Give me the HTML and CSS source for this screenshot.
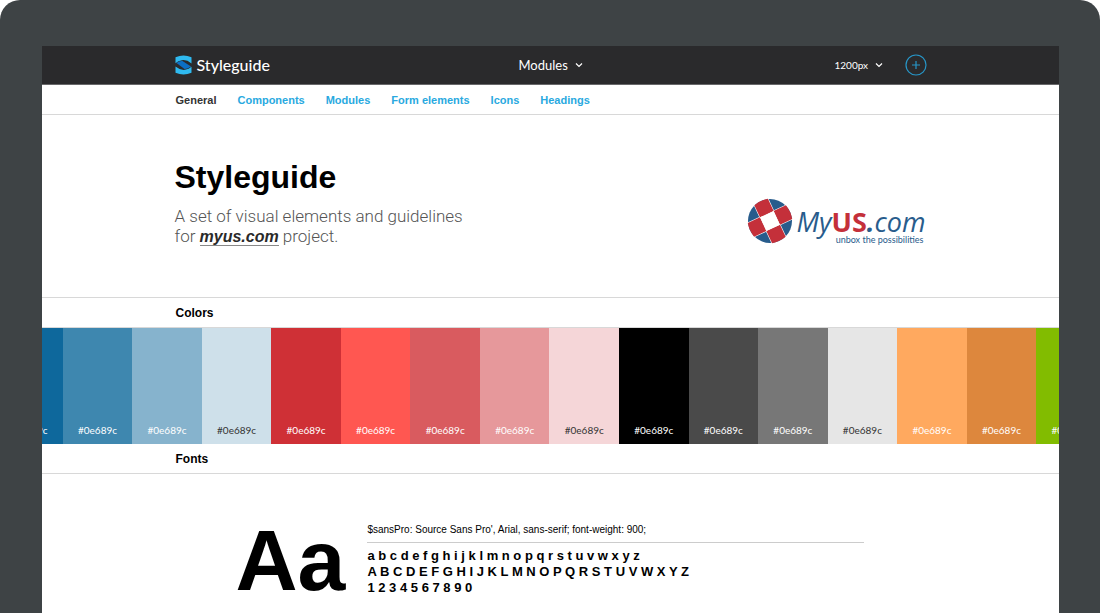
FILE: index.html
```html
<!DOCTYPE html>
<html lang="en">
<head>
<meta charset="utf-8">
<meta name="viewport" content="width=device-width, initial-scale=1">
<title>Styleguide</title>
<link rel="stylesheet" href="styles.css">
</head>
<body>
<div class="device">
  <div class="screen">
    <header class="topbar">
      <div class="container topbar-inner">
        <a class="brand" href="#">
          <svg class="brand-mark" viewBox="0 0 17 20" aria-hidden="true">
            <path fill="#2fb9ef" d="M.5 2.300Q8.500-1.300 16.500 2.300V8.400Q12 4.600 7 5.200Q3 5.800.5 8.200Z"/>
            <path fill="#2fb9ef" d="M16.500 17.700Q8.500 21.300.5 17.700V11.600Q5 15.400 10 14.800Q14 14.200 16.500 11.800Z"/>
            <path fill="#0c6fc4" d="M1.500 8Q4.500 5.600 7.500 6L16 11.600Q13 14.200 9.500 14Z"/>
          </svg>
          <span>Styleguide</span>
        </a>
        <label class="picker picker-main">
          <select aria-label="Section"><option>Modules</option></select>
          <svg class="chevron" viewBox="0 0 8 6" aria-hidden="true"><path d="M1 1.500 4 4.500 7 1.500"/></svg>
        </label>
        <div class="tools">
          <label class="picker picker-size">
            <select aria-label="Page width"><option>1200px</option></select>
            <svg class="chevron" viewBox="0 0 8 6" aria-hidden="true"><path d="M1 1.500 4 4.500 7 1.500"/></svg>
          </label>
          <button class="add" type="button" aria-label="Add">
            <svg viewBox="0 0 22 22" aria-hidden="true"><circle cx="11" cy="11" r="10"/><path d="M11 7V15M7 11H15"/></svg>
          </button>
        </div>
      </div>
    </header>

    <nav class="tabs">
      <div class="container tabs-inner">
        <a class="tab tab-active" href="#">General</a>
        <a class="tab" href="#">Components</a>
        <a class="tab" href="#">Modules</a>
        <a class="tab" href="#">Form elements</a>
        <a class="tab" href="#">Icons</a>
        <a class="tab" href="#">Headings</a>
      </div>
    </nav>

    <main>
      <section class="hero">
        <div class="container hero-inner">
          <div>
            <h1 class="hero-title">Styleguide</h1>
            <p class="hero-text">A set of visual elements and guidelines<br>for <a class="hero-link" href="#">myus.com</a> project.</p>
          </div>
          <div class="client">
            <svg class="client-mark" viewBox="0 0 46 46" aria-hidden="true">
              <circle cx="23" cy="23" r="22" fill="#285c8c"/>
              <g transform="rotate(-25 23 23)">
                <path stroke="#fff" stroke-width="1.200" d="M15.500 0V46M30.500 0V46M0 15.500H46M0 30.500H46"/>
                <path fill="#c4303a" d="M15.500 2Q23 0 30.500 2V15.500H15.500ZM15.500 30.500H30.500V44Q23 46 15.500 44ZM2 15.500H15.500V30.500H2Q0 23 2 15.500ZM30.500 15.500H44Q46 23 44 30.500H30.500Z"/>
                <path fill="#fff" d="M15.500 15.500H30.500V30.500H15.500Z"/>
              </g>
            </svg>
            <div class="client-words">
              <div class="client-name">My<b>US</b><strong>.</strong>com</div>
              <div class="client-tag">unbox the possibilities</div>
            </div>
          </div>
        </div>
      </section>

      <section>
        <h2 class="section-title"><span class="container">Colors</span></h2>
        <div class="swatch-strip">
          <ul class="swatches">
            <li class="swatch blue-1">#0e689c</li>
            <li class="swatch blue-2">#0e689c</li>
            <li class="swatch blue-3">#0e689c</li>
            <li class="swatch blue-4">#0e689c</li>
            <li class="swatch red-1">#0e689c</li>
            <li class="swatch red-2">#0e689c</li>
            <li class="swatch red-3">#0e689c</li>
            <li class="swatch red-4">#0e689c</li>
            <li class="swatch red-5">#0e689c</li>
            <li class="swatch gray-1">#0e689c</li>
            <li class="swatch gray-2">#0e689c</li>
            <li class="swatch gray-3">#0e689c</li>
            <li class="swatch gray-4">#0e689c</li>
            <li class="swatch orange-1">#0e689c</li>
            <li class="swatch orange-2">#0e689c</li>
            <li class="swatch green-1">#0e689c</li>
          </ul>
        </div>
      </section>

      <section>
        <h2 class="section-title section-line"><span class="container">Fonts</span></h2>
        <div class="font-card">
          <div class="font-sample">Aa</div>
          <div class="font-info">
            <p class="font-rule">$sansPro: Source Sans Pro', Arial, sans-serif; font-weight: 900;</p>
            <p class="font-glyphs">a b c d e f g h i j k l m n o p q r s t u v w x y z<br>A B C D E F G H I J K L M N O P Q R S T U V W X Y Z<br>1 2 3 4 5 6 7 8 9 0</p>
          </div>
        </div>
      </section>
    </main>
  </div>
</div>
</body>
</html>
```
FILE: styles.css
```css
* { box-sizing: border-box; }
body {
  margin: 0;
  background: #fff;
  font-family: "Liberation Sans", Arial, sans-serif;
  color: #000;
}
h1, h2, p, ul { margin: 0; padding: 0; }
a { text-decoration: none; }

.device {
  height: 100vh;
  padding: 46px 41px 0 42px;
  border-radius: 20px 20px 0 0;
  background: #3e4345;
  overflow: hidden;
}
.screen { min-height: 100%; background: #fff; overflow: hidden; }
.container { display: block; width: 100%; max-width: 752px; margin: 0 auto; }

.topbar {
  background: #2a2a2c;
  color: #fff;
  font-family: Lato, sans-serif;
  border-bottom: 1px solid #68686a;
}
.topbar-inner {
  display: grid;
  grid-template-columns: 1fr auto 1fr;
  align-items: center;
  height: 38px;
}
.brand {
  display: flex;
  align-items: center;
  gap: 5px;
  color: #fff;
  font-size: 16px;
  line-height: 18px;
  font-weight: 500;
}
.brand-mark { width: 17px; height: 20px; }
.picker { display: flex; align-items: center; gap: 6px; }
.picker select {
  appearance: none;
  padding: 0;
  border: 0;
  background: transparent;
  color: #fff;
  font-family: inherit;
}
.picker-main select { font-size: 13px; }
.picker-size select { font-size: 10px; }
.chevron { width: 8px; height: 6px; fill: none; stroke: #fff; stroke-width: 1.2; }
.tools { display: flex; justify-content: flex-end; align-items: center; gap: 22px; }
.add { width: 22px; height: 22px; padding: 0; border: 0; background: none; }
.add svg { display: block; fill: none; stroke: #2796c8; stroke-width: 1.2; }

.tabs { border-bottom: 1px solid #d8d8d8; }
.tabs-inner { display: flex; align-items: center; gap: 21px; height: 29px; padding-left: 1px; }
.tab { color: #29a9e0; font-size: 11px; font-weight: 700; }
.tab-active { color: #333; }

.hero { border-bottom: 1px solid #d8d8d8; }
.hero-inner {
  display: flex;
  justify-content: space-between;
  align-items: flex-start;
  padding: 42px 0 50px;
}
.hero-title { font-size: 32px; line-height: 40px; font-weight: 700; }
.hero-text { margin-top: 9px; font-family: Roboto, sans-serif; font-size: 17px; font-weight: 300; line-height: 20px; color: #555; }
.hero-link {
  font-family: "Liberation Sans", Arial, sans-serif;
  font-size: 16px;
  color: #2a2a2a;
  font-style: italic;
  font-weight: 700;
  border-bottom: 1px solid #888;
}
.client { display: flex; gap: 4px; margin-top: 41px; padding-right: 1px; }
.client-mark { width: 46px; height: 46px; }
.client-words { font-family: "Open Sans", sans-serif; color: #285c8c; padding-top: 10px; }
.client-name { font-size: 27px; line-height: 28px; font-style: italic; }
.client-name b { font-style: normal; color: #c4303a; }
.client-tag { padding-right: 2px; font-family: Lato, sans-serif; font-size: 9px; line-height: 8px; text-align: right; }

.section-title { font-size: 12px; line-height: 29px; font-weight: 700; }
.section-title .container { padding: 2px 0 0 1px; line-height: 27px; }
.section-line { border-bottom: 1px solid #d8d8d8; }

.swatch-strip { overflow: hidden; border-top: 1px solid #d8d8d8; }
.swatches {
  display: grid;
  grid-template-columns: repeat(16, 1fr);
  width: 109.4%;
  margin-left: -4.8%;
  list-style: none;
}
.swatch {
  height: 116px;
  padding-top: 96px;
  font-family: Lato, sans-serif;
  font-size: 10px;
  line-height: 12px;
  text-align: center;
  color: #fff;
}
.blue-1 { background: #0e689c; }
.blue-2 { background: #3e87af; }
.blue-3 { background: #86b3cd; }
.blue-4 { background: #cee0ea; color: #333; }
.red-1 { background: #cf3036; }
.red-2 { background: #ff5751; }
.red-3 { background: #d95b5f; }
.red-4 { background: #e6989b; }
.red-5 { background: #f5d6d8; color: #333; }
.gray-1 { background: #000; }
.gray-2 { background: #4a4a4a; }
.gray-3 { background: #777; }
.gray-4 { background: #e6e6e6; color: #333; }
.orange-1 { background: #ffa95f; }
.orange-2 { background: #dd873d; }
.green-1 { background: #82bc00; }

.font-card {
  display: flex;
  gap: 22px;
  width: 100%;
  max-width: 630px;
  margin: 0 auto;
  padding: 47px 2px 0 0;
}
.font-sample { font-size: 86px; line-height: 78px; font-weight: 700; }
.font-info { flex: 1; }
.font-rule { padding-bottom: 3px; border-bottom: 1px solid #ccc; font-size: 10px; line-height: 18px; }
.font-glyphs { margin-top: 5px; font-size: 13px; line-height: 16px; font-weight: 700; }
```
